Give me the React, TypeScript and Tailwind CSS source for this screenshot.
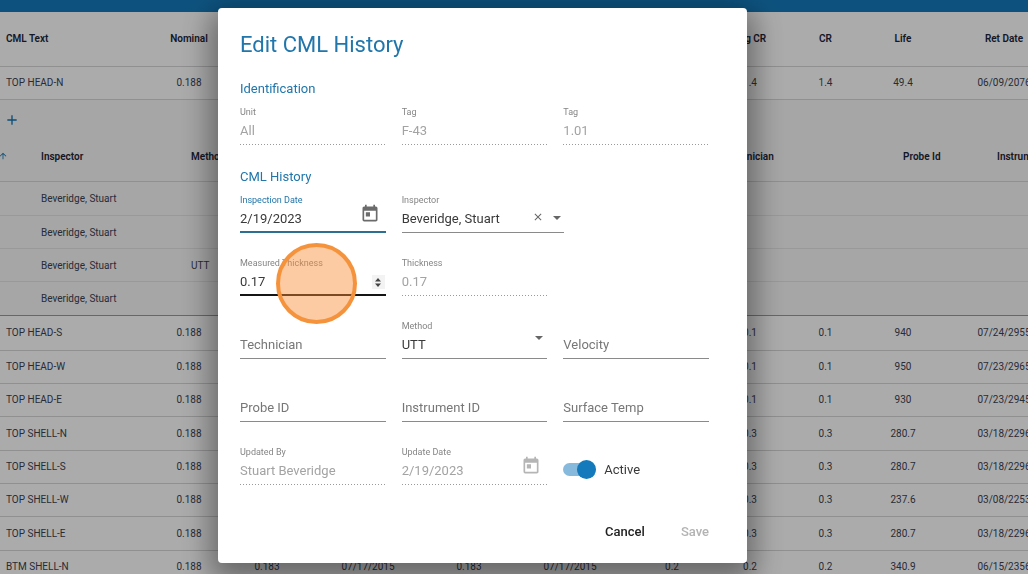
import { useState } from 'react';
import type { ReactNode } from 'react';
import { clsx } from 'clsx';
import { MdAdd, MdArrowUpward, MdClose, MdToday } from 'react-icons/md';

const columns = [
  { name: 'CML Text', width: 'w-[150px]' },
  { name: 'Nominal', width: 'w-[78px]' },
  { name: '', width: 'w-[78px]' },
  { name: '', width: 'w-[124px]' },
  { name: '', width: 'w-[78px]' },
  { name: '', width: 'w-[124px]' },
  { name: '', width: 'w-[80px]' },
  { name: 'Avg CR', width: 'w-[76px]' },
  { name: 'CR', width: 'w-[75px]' },
  { name: 'Life', width: 'w-[80px]' },
  { name: 'Ret Date', width: 'w-[122px]' },
];

const selectedRow = ['TOP HEAD-N', '0.188', '', '', '', '', '', '1.4', '1.4', '49.4', '06/09/2076'];

const rows = [
  ['TOP HEAD-S', '0.188', '', '', '', '', '', '0.1', '0.1', '940', '07/24/2955'],
  ['TOP HEAD-W', '0.188', '', '', '', '', '', '0.1', '0.1', '950', '07/23/2965'],
  ['TOP HEAD-E', '0.188', '', '', '', '', '', '0.1', '0.1', '930', '07/23/2945'],
  ['TOP SHELL-N', '0.188', '', '', '', '', '', '0.3', '0.3', '280.7', '03/18/2296'],
  ['TOP SHELL-S', '0.188', '', '', '', '', '', '0.3', '0.3', '280.7', '03/18/2296'],
  ['TOP SHELL-W', '0.188', '', '', '', '', '', '0.3', '0.3', '237.6', '03/08/2253'],
  ['TOP SHELL-E', '0.188', '', '', '', '', '', '0.3', '0.3', '280.7', '03/18/2296'],
  ['BTM SHELL-N', '0.188', '0.183', '07/17/2015', '0.183', '07/17/2015', '0.2', '0.2', '0.2', '340.9', '06/15/2356'],
];

const history = [
  { inspector: 'Beveridge, Stuart', method: '' },
  { inspector: 'Beveridge, Stuart', method: '' },
  { inspector: 'Beveridge, Stuart', method: 'UTT' },
  { inspector: 'Beveridge, Stuart', method: '' },
];

function DataRow({ cells }: { cells: string[] }) {
  return (
    <tr className="h-[33px] border-b border-[#d4d4d4] nth-[3n]:h-[34px]">
      {cells.map((cell, index) => (
        <td key={index} className={index === 0 ? 'pl-1.5 text-left' : 'text-center'}>
          {cell}
        </td>
      ))}
    </tr>
  );
}

function HistoryTable() {
  return (
    <div className="bg-[#f5f5f5]">
      <div className="flex h-8 items-center pt-2 pl-1">
        <button type="button" aria-label="Add history" className="text-[#1272b0]">
          <MdAdd size={16} />
        </button>
      </div>
      <table className="w-full table-fixed border-collapse text-left">
        <thead>
          <tr className="h-[50px] border-b border-[#d4d4d4] text-[#1c2438]">
            <th className="w-[41px]">
              <MdArrowUpward size={10} className="-ml-0.5 text-[#1272b0]" />
            </th>
            <th className="w-[150px] font-semibold">Inspector</th>
            <th className="w-[534px] font-semibold">Method</th>
            <th className="w-[178px] font-semibold">Technician</th>
            <th className="w-[94px] font-semibold">Probe Id</th>
            <th className="font-semibold">Instrument</th>
          </tr>
        </thead>
        <tbody>
          {history.map((item, index) => (
            <tr key={index} className="h-[33px] border-b border-[#e2e2e2] first:h-[34px] last:h-[34px] last:border-[#999]">
              <td />
              <td>{item.inspector}</td>
              <td>{item.method}</td>
              <td />
              <td />
              <td />
            </tr>
          ))}
        </tbody>
      </table>
    </div>
  );
}

function CmlTable() {
  return (
    <table className="w-full min-w-[1065px] table-fixed border-collapse font-[Roboto,sans-serif] text-[10px] text-[#3c4150]">
      <thead>
        <tr className="h-[54px] border-b border-[#d4d4d4] text-[#1c2438]">
          {columns.map((column, index) => (
            <th
              key={index}
              className={clsx('font-semibold', column.width, index === 0 ? 'pl-1.5 text-left' : 'text-center')}
            >
              {column.name}
            </th>
          ))}
        </tr>
      </thead>
      <tbody>
        <DataRow cells={selectedRow} />
        <tr>
          <td colSpan={columns.length} className="p-0">
            <HistoryTable />
          </td>
        </tr>
        {rows.map((cells) => (
          <DataRow key={cells[0]} cells={cells} />
        ))}
      </tbody>
    </table>
  );
}

interface FieldProps {
  id: string;
  label: string;
  value?: string;
  type?: string;
  disabled?: boolean;
  line?: string;
  labelColor?: string;
  children?: ReactNode;
}

const dottedLine =
  'bg-[linear-gradient(to_right,#9a9a9a_1px,transparent_1px)] bg-[length:3px_1px] bg-bottom-left bg-repeat-x';

function Field({ id, label, value, type = 'text', disabled, line, labelColor, children }: FieldProps) {
  const empty = value === undefined;

  return (
    <div className="relative h-[39px] pt-3">
      <label
        htmlFor={id}
        className={empty ? 'sr-only' : clsx('absolute top-0 left-0 text-[9px] leading-3', labelColor ?? 'text-[#858585]')}
      >
        {label}
      </label>
      <input
        id={id}
        type={type}
        defaultValue={value}
        placeholder={empty ? label : undefined}
        disabled={disabled}
        className={clsx(
          'block h-[27px] w-full appearance-none text-[13px] outline-none placeholder:text-[#777] [&::-webkit-inner-spin-button]:appearance-none',
          disabled ? ['pb-0.5 text-[#a3a3a3]', dottedLine] : ['pb-px text-[#3a3a3a]', line ?? 'border-b border-[#8a8a8a]'],
        )}
      />
      {children}
    </div>
  );
}

function SelectArrow({ className }: { className: string }) {
  return (
    <svg viewBox="0 0 8 4" className={clsx('pointer-events-none absolute h-1 w-2', className)} aria-hidden="true">
      <path d="M0 0h8L4 4z" fill="#666" />
    </svg>
  );
}

function SelectField({ id, label, value, children }: { id: string; label: string; value: string; children: ReactNode }) {
  return (
    <div className="relative h-[39px] pt-3">
      <label htmlFor={id} className="absolute top-0 left-0 text-[9px] leading-3 text-[#858585]">
        {label}
      </label>
      <select
        id={id}
        className="block h-[27px] w-full appearance-none border-b border-[#8a8a8a] text-[13px] text-[#3a3a3a] outline-none"
      >
        <option>{value}</option>
      </select>
      {children}
    </div>
  );
}

function EditDialog() {
  const [active, setActive] = useState(true);

  return (
    <form
      role="dialog"
      aria-labelledby="dialog-title"
      className="w-full max-w-[529px] rounded bg-white pt-6 pr-[38px] pb-[13px] pl-[22px] font-[Roboto,sans-serif] shadow-[0_10px_30px_8px_rgba(0,0,0,0.4)]"
    >
      <h1 id="dialog-title" className="text-[22px] leading-[25px] text-[#2176ab]">
        Edit CML History
      </h1>

      <h2 className="mt-[22px] mb-[7px] text-[13px] leading-5 text-[#2176ab]">Identification</h2>
      <div className="grid grid-cols-3 gap-x-4">
        <Field id="unit" label="Unit" value="All" disabled />
        <Field id="tag" label="Tag" value="F-43" disabled />
        <Field id="cml-tag" label="Tag" value="1.01" disabled />
      </div>

      <h2 className="mt-[22px] mb-[7px] text-[13px] leading-5 text-[#2176ab]">CML History</h2>
      <div className="grid grid-cols-3 gap-x-4 gap-y-6">
        <Field
          id="inspection-date"
          label="Inspection Date"
          value="2/19/2023"
          line="border-b-2 border-[#2c6f92]"
          labelColor="text-[#2176ab]"
        >
          <button type="button" aria-label="Pick a date" className="absolute top-2.5 right-1.5 text-[#6b6b6b]">
            <MdToday size={20} />
          </button>
        </Field>
        <div className="col-span-2 w-[162px]">
          <SelectField id="inspector" label="Inspector" value="Beveridge, Stuart">
            <button type="button" aria-label="Clear" className="absolute top-[17px] right-5 text-[#666]">
              <MdClose size={12} />
            </button>
            <SelectArrow className="top-[22px] right-[3px]" />
          </SelectField>
        </div>

        <Field
          id="measured-thickness"
          label="Measured Thickness"
          value="0.17"
          type="number"
          line="border-b-2 border-[#151515]"
        >
          <button
            type="button"
            aria-label="Step value"
            className="absolute top-[18px] right-px flex h-3.5 w-[13px] items-center justify-center bg-[#f3f3f3]"
          >
            <svg viewBox="0 0 6 9" className="h-[9px] w-1.5" fill="#444" aria-hidden="true">
              <path d="M3 0l3 3.5H0zM3 9l3-3.5H0z" />
            </svg>
          </button>
          {/* Click marker */}
          <div className="pointer-events-none absolute -top-3.5 left-9 z-10 size-[81px] rounded-full border-4 border-[#f5933d] bg-[#f98b32]/45" />
        </Field>
        <Field id="thickness" label="Thickness" value="0.17" disabled />
        <div />

        <Field id="technician" label="Technician" />
        <SelectField id="method" label="Method" value="UTT">
          <SelectArrow className="top-4 right-1" />
        </SelectField>
        <Field id="velocity" label="Velocity" />

        <Field id="probe-id" label="Probe ID" />
        <Field id="instrument-id" label="Instrument ID" />
        <Field id="surface-temp" label="Surface Temp" />

        <Field id="updated-by" label="Updated By" value="Stuart Beveridge" disabled />
        <Field id="update-date" label="Update Date" value="2/19/2023" disabled>
          <MdToday size={20} className="absolute top-2.5 right-1.5 text-[#b5b5b5]" />
        </Field>
        <label className="flex h-[39px] items-center gap-2 pt-2 text-[13px] text-[#3a3a3a]">
          <span className="relative flex h-[19px] w-[33px] items-center">
            <input
              type="checkbox"
              role="switch"
              checked={active}
              onChange={() => setActive(!active)}
              className={clsx('h-[13px] w-[30px] appearance-none rounded-full', active ? 'bg-[#87b9dc]' : 'bg-[#bdbdbd]')}
            />
            <span
              className={clsx(
                'pointer-events-none absolute top-0 size-[19px] rounded-full',
                active ? 'right-0 bg-[#147abb]' : 'left-0 bg-[#fafafa] shadow',
              )}
            />
          </span>
          Active
        </label>
      </div>

      <div className="mt-[29px] flex h-9 items-center justify-end gap-9 text-[13px] font-medium">
        <button type="button" className="text-[#222]">
          Cancel
        </button>
        <button type="submit" disabled className="text-[#b3b3b3]">
          Save
        </button>
      </div>
    </form>
  );
}

export default function App() {
  return (
    <div className="h-screen overflow-hidden bg-[#fdfdfd]">
      <header className="h-3 bg-[#147abb]" />
      <CmlTable />
      <div className="fixed inset-0 flex items-start justify-center bg-black/32 pt-2 pr-[63px]">
        <EditDialog />
      </div>
    </div>
  );
}
